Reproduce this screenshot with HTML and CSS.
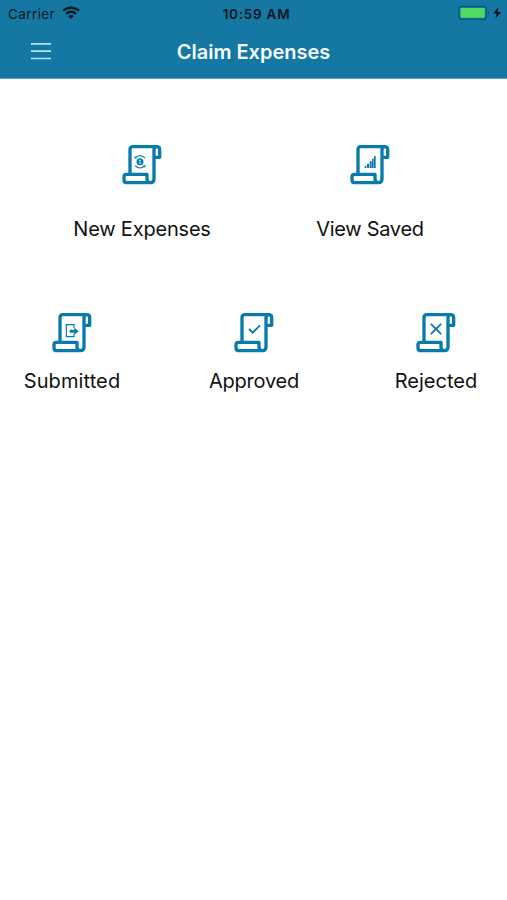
FILE: index.html
```html
<!DOCTYPE html>
<html lang="en">
<head>
<meta charset="utf-8">
<title>Claim Expenses</title>
<link rel="stylesheet" href="styles.css">
</head>
<body>
<svg width="0" height="0" class="defs" aria-hidden="true">
  <symbol id="scroll" viewBox="0 0 165 165">
    <path d="M45 108V35Q45 26 54 26H125Q134 26 134 35V58H117V35Q117 27 125 26M117 58V123Q117 134 106 134Q96 134 96 123V109H34Q27 109 27 116V125Q27 134 36 134H107" fill="none" stroke="currentColor" stroke-width="10" stroke-linejoin="round"/>
  </symbol>
</svg>
<header class="header">
  <div class="status">
    <div class="carrier"><span>Carrier</span>
      <svg class="wifi" viewBox="0 0 18 13" fill="none" stroke="currentColor" stroke-width="2.3"><path d="M1 4.7Q9-1.8 17 4.7M4 7.8Q9 3.8 14 7.8"/><path d="M6.2 10Q9 7.8 11.8 10L9 12.7Z" fill="currentColor" stroke="none"/></svg>
    </div>
    <span class="time">10:59 AM</span>
    <svg class="battery" viewBox="0 0 44 16"><rect x=".9" y="1.4" width="27.5" height="13" rx="3" fill="none" stroke="#0b5673" stroke-width="1.3"/><rect x="2.5" y="3" width="24.3" height="9.8" rx="1" fill="#4cdb63"/><path d="M30 5.8Q32.2 8 30 10.2Z" fill="#0b5673"/><path d="M40.4 2.2L35.2 8.6H38.6L37.5 13.4L43 7H39.5Z" fill="#050d12"/></svg>
  </div>
  <nav class="nav">
    <svg class="menu" viewBox="0 0 20 18" stroke="#b5e2f3" stroke-width="1.7"><path d="M0 1.8H20M0 9.2H20M0 16.5H20"/></svg>
    <h1 class="title">Claim Expenses</h1>
  </nav>
</header>
<main>
  <section class="row primary">
    <a class="item">
      <svg class="icon" viewBox="0 0 165 165"><use href="#scroll"/><g fill="none" stroke="currentColor" stroke-width="3.5"><path d="M60 60Q75 46 90 60M60 83Q75 97 90 83"/><path d="M60 53V61H67M90 90V82H83" stroke-width="2"/></g><circle cx="75" cy="71.500" r="10.500" fill="currentColor"/><path d="M78 67Q72 65 72.500 69Q78 72 77.500 75Q75 78 71.500 75.500" fill="none" stroke="#fff" stroke-width="2"/></svg>
      <span class="label new">New Expenses</span>
    </a>
    <a class="item">
      <svg class="icon" viewBox="0 0 165 165"><use href="#scroll"/><path d="M65 83H70V90H65ZM72 77H78V90H72ZM80 70H86V90H80ZM87 62H92V90H87ZM93 54H98V90H93Z" fill="currentColor"/></svg>
      <span class="label view">View Saved</span>
    </a>
  </section>
  <section class="row states">
    <a class="item">
      <svg class="icon" viewBox="0 0 165 165"><use href="#scroll"/><path d="M87 67V56H64V92H87V83" fill="none" stroke="currentColor" stroke-width="3.500"/><path d="M74 71H88V65L101 75.500L88 86V80H74Z" fill="currentColor"/></svg>
      <span class="label submitted">Submitted</span>
    </a>
    <a class="item">
      <svg class="icon" viewBox="0 0 165 165"><use href="#scroll"/><path d="M66 69L77 80L99 58" fill="none" stroke="currentColor" stroke-width="5.500"/></svg>
      <span class="label approved">Approved</span>
    </a>
    <a class="item">
      <svg class="icon" viewBox="0 0 165 165"><use href="#scroll"/><path d="M67 55L95 83M95 55L67 83" fill="none" stroke="currentColor" stroke-width="5.500" stroke-linecap="round"/></svg>
      <span class="label rejected">Rejected</span>
    </a>
  </section>
</main>
</body>
</html>
```
FILE: styles.css
```css
* { box-sizing: border-box; }
body { margin: 0; background: #fff; color: #111; font-family: Inter, "Liberation Sans", sans-serif; }
.defs { display: block; }
.header { height: 79px; background: #1478a3; border-bottom: 1px solid #59a4c3; }
.status { height: 27px; display: grid; grid-template-columns: 1fr auto 1fr; align-items: center; padding: 0 5px 0 8px; color: #07151c; }
.carrier { display: flex; align-items: center; gap: 7px; font-size: 13.5px; letter-spacing: .4px; }
.wifi { width: 18px; height: 13px; margin-bottom: 2px; }
.time { font-size: 13.5px; font-weight: 600; letter-spacing: .75px; margin-left: 3px; }
.battery { width: 44px; height: 16px; justify-self: end; margin-bottom: 1px; }
.nav { height: 50px; display: grid; grid-template-columns: 31px 1fr 31px; padding: 0 31px; align-items: center; }
.menu { width: 20px; height: 18px; margin-bottom: 2px; }
.title { margin: 0; font-size: 20px; font-weight: 600; line-height: 26px; text-align: center; color: #f5fcff; white-space: nowrap; }
.row { display: flex; }
.primary { padding: 59px 23px 0 28px; }
.primary .item { width: 228px; gap: 22px; }
.states { padding: 63px 15px 0 16px; justify-content: space-between; }
.states .item { width: 112px; gap: 6px; }
.item { display: flex; flex-direction: column; align-items: center; }
.icon { width: 55px; height: 55px; color: #087bad; }
.label { font-size: 20px; line-height: 28px; white-space: nowrap; }
.new { letter-spacing: -.2px; }
.view { letter-spacing: -.3px; }
.submitted { letter-spacing: .1px; }
.approved { letter-spacing: -.2px; }
```
